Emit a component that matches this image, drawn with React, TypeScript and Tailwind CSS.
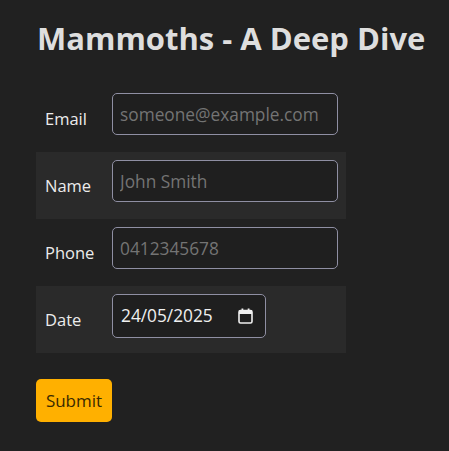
import type { ReactNode } from 'react';

function Row({ label, shaded, children }: { label: string; shaded?: boolean; children: ReactNode }) {
  return (
    <div className={`flex h-[67px] ${shaded ? 'bg-[#2a2a2a]' : ''}`}>
      <div className="flex w-[76px] items-center pl-[9px] pt-[2px] text-[16.5px] text-[#ececec]">{label}</div>
      <div className="pt-2">{children}</div>
    </div>
  );
}

function TextField({ placeholder, type = 'text' }: { placeholder: string; type?: string }) {
  return (
    <input
      type={type}
      placeholder={placeholder}
      className="h-[42px] w-[226px] rounded-[5px] border border-[#8f8fa3] bg-[#1f1f1f] px-[7px] text-[17.3px] text-[#e8e8e8] outline-none placeholder:text-[#747474]"
    />
  );
}

export default function App() {
  return (
    <div
      className="min-h-[451px] bg-[#212121] pl-9 pt-[17px]"
      style={{ fontFamily: '"Open Sans", "Noto Sans", sans-serif' }}
    >
      <h1 className="ml-px text-[31px] font-bold leading-[42px] text-[#dedede]">
        Mammoths - A Deep Dive
      </h1>

      <form className="mt-[26px] w-[310px]" onSubmit={(e) => e.preventDefault()}>
        <Row label="Email">
          <TextField placeholder="someone@example.com" type="email" />
        </Row>
        <Row label="Name" shaded>
          <TextField placeholder="John Smith" />
        </Row>
        <Row label="Phone">
          <TextField placeholder="0412345678" type="tel" />
        </Row>
        <Row label="Date" shaded>
          {/* date field drawn by hand so the dd/mm/yyyy format is fixed */}
          <div className="flex h-[44px] w-[154px] items-center justify-between rounded-[5px] border border-[#8f8fa3] bg-[#1f1f1f] pl-[8px] pr-[12px] text-[17.3px] text-[#f0f0f0]">
            <span>24/05/2025</span>
            <svg width="15" height="16" viewBox="0 0 15 16" fill="none">
              <rect x="1" y="2.5" width="13" height="12.5" rx="1.5" stroke="#f0f0f0" strokeWidth="1.6" />
              <rect x="1" y="2.5" width="13" height="3.5" fill="#f0f0f0" />
              <rect x="3.5" y="0.5" width="1.8" height="3" fill="#f0f0f0" />
              <rect x="9.7" y="0.5" width="1.8" height="3" fill="#f0f0f0" />
            </svg>
          </div>
        </Row>

        <button
          type="submit"
          className="mt-[26px] h-[43px] w-[76px] rounded-[5px] bg-[#ffb000] text-[17px] text-[#3a2a00]"
        >
          Submit
        </button>
      </form>
    </div>
  );
}
